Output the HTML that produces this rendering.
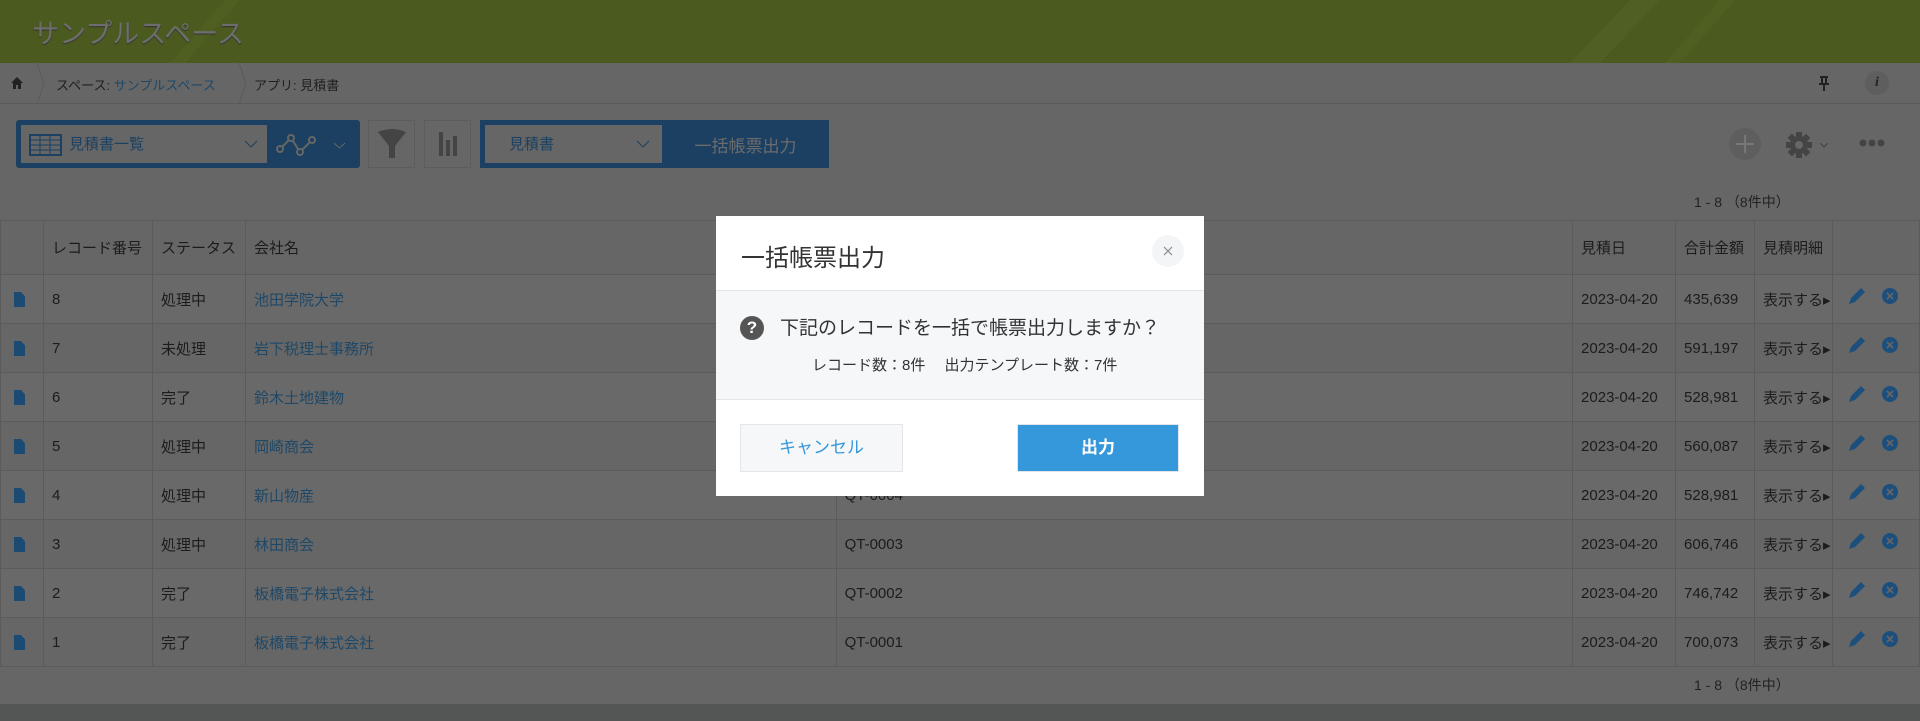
<!DOCTYPE html>
<html><head><meta charset="utf-8">
<style>
*{box-sizing:border-box;margin:0;padding:0}
body{width:1920px;height:721px;overflow:hidden;background:#666;font-family:"Liberation Sans","Noto Sans CJK JP",sans-serif;color:#1c1c1c;position:relative}
.hdr{position:absolute;left:0;top:0;width:1920px;height:63px;background:#4b5a1f;overflow:hidden}
.hdr .t{position:absolute;left:32px;top:12px;font-size:27px;color:#6d6d6d;text-shadow:0 1px 1px #333}
.bc{position:absolute;top:63px;left:0;width:1920px;height:41px;border-bottom:1px solid #5a5a5a;font-size:13px;color:#202020}
.bc span{position:absolute;top:12px}
.blue{background:#1b4061}
.abs{position:absolute}
table{position:absolute;left:0;top:220px;border-collapse:collapse;width:1920px;font-size:15px}
td{border:1px solid #5b5b5b;height:49px;padding-left:8px;vertical-align:middle;white-space:nowrap}
tr.h td{height:54px}
tr:nth-child(even) td{background:#696969}
td.d{padding-left:13px}
a{color:#1e4868;text-decoration:none}
.doc{display:inline-block;width:11px;height:15px;background:#1b4a73;clip-path:polygon(0 0,65% 0,100% 30%,100% 100%,0 100%);vertical-align:middle}
.modal{position:absolute;left:716px;top:216px;width:488px;height:280px;background:#fff}
</style></head><body>
<div class="hdr">
<svg class="abs" style="left:0;top:0" width="1920" height="63"><path d="M225 0 L240 0 L185 63 L170 63Z" fill="#4f5f21"/><path d="M1630 0 L1660 0 L1600 63 L1570 63Z" fill="#505f23"/><path d="M1720 0 L1735 0 L1680 63 L1665 63Z" fill="#4f5f21"/></svg>
<div class="t">サンプルスペース</div></div>
<div class="bc">
<svg class="abs" style="left:10px;top:13px" width="14" height="14"><path d="M7 1 L13 7 L11 7 L11 13 L8 13 L8 9 L6 9 L6 13 L3 13 L3 7 L1 7Z" fill="#222"/></svg>
<svg class="abs" style="left:36px;top:0" width="220" height="41"><path d="M1 0 L8 20 L1 41" stroke="#5a5a5a" fill="none"/><path d="M203 0 L210 20 L203 41" stroke="#5a5a5a" fill="none"/></svg>
<span style="left:56px">スペース: <a>サンプルスペース</a></span>
<span style="left:254px">アプリ: 見積書</span>
<svg class="abs" style="left:1818px;top:13px" width="12" height="16"><path d="M2 1h8M4 1v6M8 1v6M1 8h10M6 8v7" stroke="#222" stroke-width="2"/></svg>
<div class="abs" style="left:1865px;top:8px;width:24px;height:24px;border-radius:50%;background:#5e5e5e;color:#222;font:italic bold 14px 'Liberation Serif',serif;text-align:center;line-height:24px">i</div>
</div>
<!-- toolbar -->
<div class="abs blue" style="left:16px;top:120px;width:344px;height:48px;border-radius:3px"></div>
<div class="abs" style="left:21px;top:125px;width:246px;height:38px;background:#666"></div>
<svg class="abs" style="left:29px;top:134px" width="33" height="22"><rect x="1" y="1" width="31" height="20" fill="none" stroke="#1b4061" stroke-width="2"/><path d="M1 6h31M1 11h31M1 16h31M11 1v20M21 1v20" stroke="#1b4061"/></svg>
<div class="abs" style="left:69px;top:133px;font-size:15px;color:#1b4061">見積書一覧</div>
<svg class="abs" style="left:244px;top:140px" width="14" height="8"><path d="M1 1l6 6 6-6" stroke="#1b4061" fill="none"/></svg>
<svg class="abs" style="left:276px;top:134px" width="42" height="22"><path d="M4 15 L15 4 L24 18 L36 6" stroke="#666" stroke-width="2" fill="none"/><circle cx="4" cy="15" r="3" fill="#1b4061" stroke="#666" stroke-width="2"/><circle cx="15" cy="4" r="3" fill="#1b4061" stroke="#666" stroke-width="2"/><circle cx="24" cy="18" r="3" fill="#1b4061" stroke="#666" stroke-width="2"/><circle cx="36" cy="6" r="3" fill="#1b4061" stroke="#666" stroke-width="2"/></svg>
<svg class="abs" style="left:333px;top:142px" width="13" height="8"><path d="M1 1l5.5 5 5.5-5" stroke="#666" fill="none"/></svg>
<div class="abs" style="left:368px;top:120px;width:47px;height:48px;border:1px solid #5c5c5c"></div>
<svg class="abs" style="left:377px;top:128px" width="30" height="32"><path d="M1 4 Q15 -2 29 4 L18 18 L18 30 L12 30 L12 18Z" fill="#444"/></svg>
<div class="abs" style="left:424px;top:120px;width:47px;height:48px;border:1px solid #5c5c5c"></div>
<svg class="abs" style="left:437px;top:132px" width="22" height="24"><rect x="2" y="0" width="4" height="24" fill="#444"/><rect x="9" y="8" width="4" height="16" fill="#444"/><rect x="16" y="4" width="4" height="20" fill="#444"/></svg>
<div class="abs blue" style="left:480px;top:120px;width:349px;height:48px"></div>
<div class="abs" style="left:485px;top:125px;width:177px;height:38px;background:#666"></div>
<div class="abs" style="left:509px;top:133px;font-size:15px;color:#1b4061">見積書</div>
<svg class="abs" style="left:636px;top:140px" width="14" height="8"><path d="M1 1l6 6 6-6" stroke="#1b4061" fill="none"/></svg>
<div class="abs" style="left:662px;top:132px;width:167px;text-align:center;font-size:17px;color:#6c6c6c">一括帳票出力</div>
<div class="abs" style="left:1729px;top:128px;width:32px;height:32px;border-radius:50%;background:#5e5e5e"></div>
<svg class="abs" style="left:1735px;top:134px" width="20" height="20"><path d="M10 1v18M1 10h18" stroke="#777" stroke-width="2"/></svg>
<svg class="abs" style="left:1786px;top:132px" width="26" height="26"><g fill="#444"><circle cx="13" cy="13" r="9"/><rect x="10" y="0" width="6" height="26"/><rect x="0" y="10" width="26" height="6"/><rect x="10" y="0" width="6" height="26" transform="rotate(45 13 13)"/><rect x="10" y="0" width="6" height="26" transform="rotate(-45 13 13)"/></g><circle cx="13" cy="13" r="4" fill="#666"/></svg>
<svg class="abs" style="left:1819px;top:142px" width="10" height="6"><path d="M1 1l4 4 4-4" stroke="#444" fill="none"/></svg>
<svg class="abs" style="left:1859px;top:139px" width="26" height="8"><circle cx="4" cy="4" r="3.5" fill="#444"/><circle cx="13" cy="4" r="3.5" fill="#444"/><circle cx="22" cy="4" r="3.5" fill="#444"/></svg>
<div class="abs" style="left:1694px;top:192px;font-size:14px;color:#222">1 - 8 （8件中）</div>
<table>
<colgroup><col style="width:43px"><col style="width:109px"><col style="width:93px"><col style="width:591px"><col style="width:737px"><col style="width:103px"><col style="width:79px"><col style="width:78px"><col style="width:87px"></colgroup>
<tr class="h"><td></td><td>レコード番号</td><td>ステータス</td><td>会社名</td><td></td><td>見積日</td><td>合計金額</td><td>見積明細</td><td></td></tr>
<tr><td class="d"><span class="doc"></span></td><td>8</td><td>処理中</td><td><a>池田学院大学</a></td><td>QT-0008</td><td>2023-04-20</td><td>435,639</td><td>表示する▸</td><td></td></tr>
<tr><td class="d"><span class="doc"></span></td><td>7</td><td>未処理</td><td><a>岩下税理士事務所</a></td><td>QT-0007</td><td>2023-04-20</td><td>591,197</td><td>表示する▸</td><td></td></tr>
<tr><td class="d"><span class="doc"></span></td><td>6</td><td>完了</td><td><a>鈴木土地建物</a></td><td>QT-0006</td><td>2023-04-20</td><td>528,981</td><td>表示する▸</td><td></td></tr>
<tr><td class="d"><span class="doc"></span></td><td>5</td><td>処理中</td><td><a>岡崎商会</a></td><td>QT-0005</td><td>2023-04-20</td><td>560,087</td><td>表示する▸</td><td></td></tr>
<tr><td class="d"><span class="doc"></span></td><td>4</td><td>処理中</td><td><a>新山物産</a></td><td>QT-0004</td><td>2023-04-20</td><td>528,981</td><td>表示する▸</td><td></td></tr>
<tr><td class="d"><span class="doc"></span></td><td>3</td><td>処理中</td><td><a>林田商会</a></td><td>QT-0003</td><td>2023-04-20</td><td>606,746</td><td>表示する▸</td><td></td></tr>
<tr><td class="d"><span class="doc"></span></td><td>2</td><td>完了</td><td><a>板橋電子株式会社</a></td><td>QT-0002</td><td>2023-04-20</td><td>746,742</td><td>表示する▸</td><td></td></tr>
<tr><td class="d"><span class="doc"></span></td><td>1</td><td>完了</td><td><a>板橋電子株式会社</a></td><td>QT-0001</td><td>2023-04-20</td><td>700,073</td><td>表示する▸</td><td></td></tr>
</table>
<svg class="abs" style="left:1845px;top:284px" width="70" height="392">
<g id="ic"><path d="M4 20 L6 14 L16 4 L20 8 L10 18Z" fill="#1d4f7c"/><circle cx="45" cy="12" r="8" fill="#1d4f7c"/><path d="M42 9l6 6M48 9l-6 6" stroke="#666" stroke-width="1.6"/></g>
<use href="#ic" y="49"/><use href="#ic" y="98"/><use href="#ic" y="147"/><use href="#ic" y="196"/><use href="#ic" y="245"/><use href="#ic" y="294"/><use href="#ic" y="343"/>
</svg>
<div class="abs" style="left:1694px;top:675px;font-size:14px;color:#222">1 - 8 （8件中）</div>
<div class="abs" style="left:0;top:704px;width:1920px;height:17px;background:#545555"></div>

<div class="modal">
<div class="abs" style="left:25px;top:22px;font-size:24px;color:#333">一括帳票出力</div>
<div class="abs" style="left:436px;top:19px;width:32px;height:32px;border-radius:50%;background:#f4f5f7"></div>
<svg class="abs" style="left:447px;top:30px" width="10" height="10"><path d="M1 1l8 8M9 1l-8 8" stroke="#888" stroke-width="1.2"/></svg>
<div class="abs" style="left:0;top:74px;width:488px;height:110px;background:#f6f7f9;border-top:1px solid #e3e5e8;border-bottom:1px solid #e3e5e8"></div>
<div class="abs" style="left:24px;top:100px;width:24px;height:24px;border-radius:50%;background:#555;color:#fff;font:bold 17px 'Liberation Sans',sans-serif;text-align:center;line-height:24px">?</div>
<div class="abs" style="left:64px;top:97px;font-size:19px;color:#333;white-space:nowrap">下記のレコードを一括で帳票出力しますか？</div>
<div class="abs" style="left:96px;top:138px;font-size:15px;color:#333;white-space:nowrap">レコード数：8件　 出力テンプレート数：7件</div>
<div class="abs" style="left:24px;top:208px;width:163px;height:48px;background:#f6f7f9;border:1px solid #e3e5e8;color:#3498db;font-size:17px;text-align:center;line-height:46px">キャンセル</div>
<div class="abs" style="left:301px;top:208px;width:162px;height:48px;background:#3498db;border:1px solid #e3e5e8;color:#fff;font-size:17px;font-weight:bold;text-align:center;line-height:46px">出力</div>
</div>
</body></html>
